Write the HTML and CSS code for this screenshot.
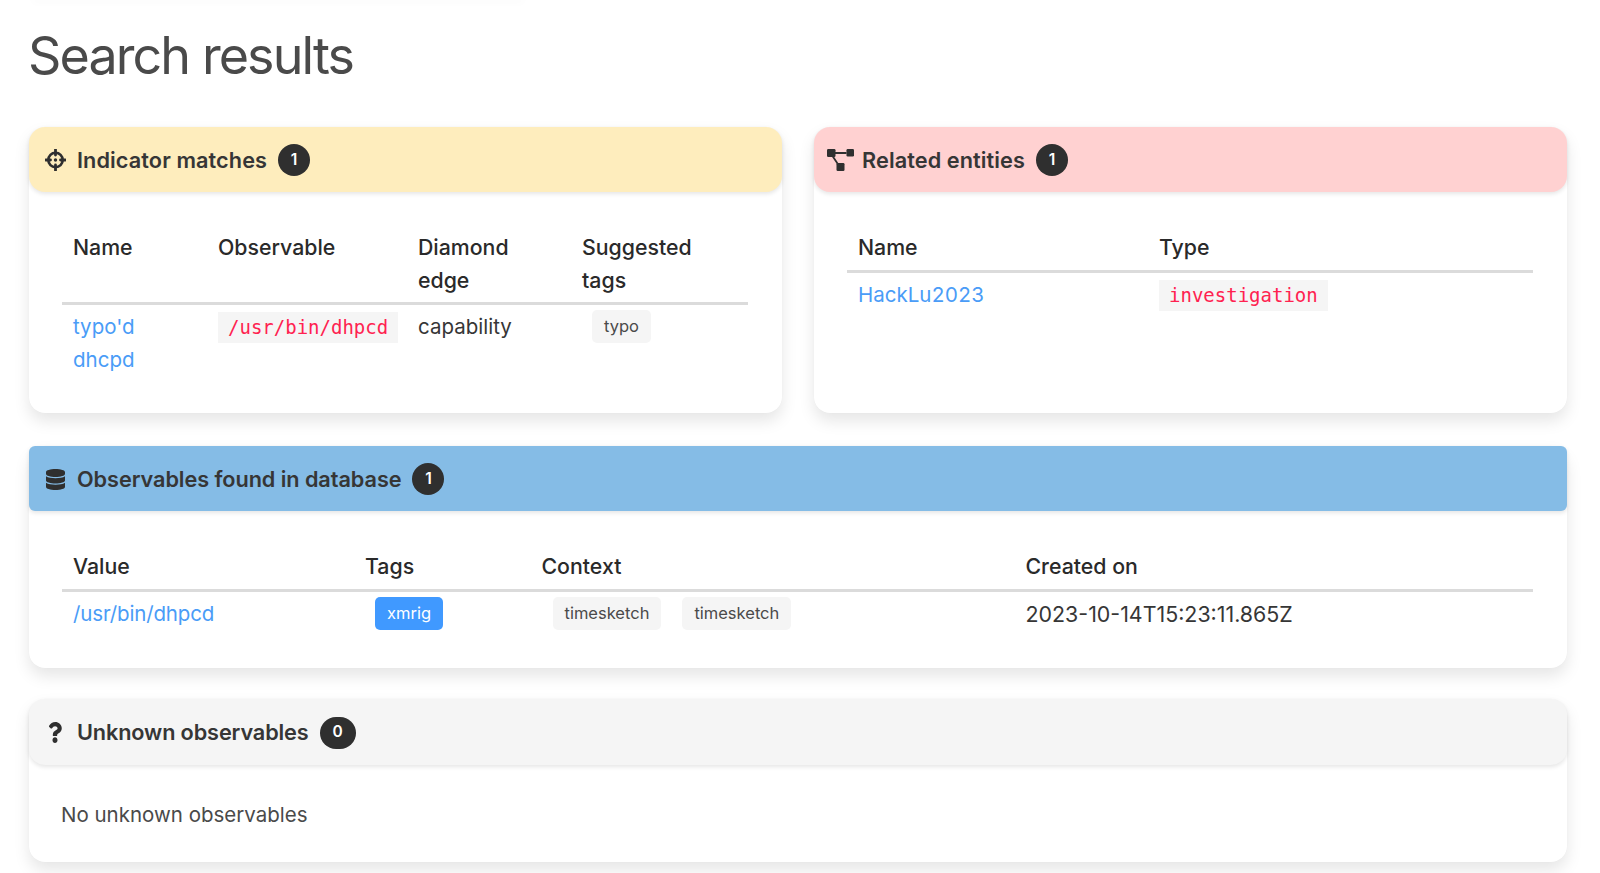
FILE: index.html
```html
<!DOCTYPE html>
<html lang="en">
<head>
    <meta charset="UTF-8">
    <title>Search results</title>
    <link rel="stylesheet" href="styles.css">
</head>
<body>
    <div class="prev-edge"></div>
    <h1 class="title">Search results</h1>

    <div class="columns">
        <div class="card">
            <header class="card-head head-yellow">
                <span class="icon">
                    <svg class="icon-cross" viewBox="0 0 21 22"><circle cx="10.5" cy="11" r="7.2" fill="none" stroke="currentColor" stroke-width="2.6"/><path d="M10.5 0.5v5.5M10.5 16v5.5M0.5 11h5M15.5 11h5" fill="none" stroke="currentColor" stroke-width="2.8" stroke-linecap="round"/><circle cx="10.5" cy="11" r="1.7" fill="currentColor"/></svg>
                </span>
                <span class="card-name">Indicator matches</span>
                <span class="count">1</span>
            </header>
            <div class="card-body">
                <table class="tbl">
                    <thead>
                        <tr><th class="w145">Name</th><th class="w200">Observable</th><th class="w164">Diamond edge</th><th>Suggested tags</th></tr>
                    </thead>
                    <tbody>
                        <tr>
                            <td><a href="#">typo'd dhcpd</a></td>
                            <td><code>/usr/bin/dhpcd</code></td>
                            <td>capability</td>
                            <td><span class="tag">typo</span></td>
                        </tr>
                    </tbody>
                </table>
            </div>
        </div>

        <div class="card">
            <header class="card-head head-red">
                <span class="icon">
                    <svg class="icon-graph" viewBox="0 0 27 22"><rect x="0" y="0" width="8.5" height="8" rx="1.2" fill="currentColor"/><rect x="19.5" y="0" width="7.5" height="7.5" rx="1.2" fill="currentColor"/><rect x="9.5" y="14" width="8" height="8" rx="1.2" fill="currentColor"/><path d="M8 4h11.5M5.5 7l5 7.5" fill="none" stroke="currentColor" stroke-width="1.8"/></svg>
                </span>
                <span class="card-name">Related entities</span>
                <span class="count">1</span>
            </header>
            <div class="card-body">
                <table class="tbl">
                    <thead>
                        <tr><th class="w301">Name</th><th>Type</th></tr>
                    </thead>
                    <tbody>
                        <tr>
                            <td><a href="#" class="num">HackLu2023</a></td>
                            <td><code>investigation</code></td>
                        </tr>
                    </tbody>
                </table>
            </div>
        </div>
    </div>

    <div class="card">
        <header class="card-head head-blue">
            <span class="icon">
                <svg class="icon-db" viewBox="0 0 448 512" preserveAspectRatio="none"><path fill="currentColor" d="M448 73.143v45.714C448 159.143 347.667 192 224 192S0 159.143 0 118.857V73.143C0 32.857 100.333 0 224 0s224 32.857 224 73.143zM448 176v102.857C448 319.143 347.667 352 224 352S0 319.143 0 278.857V176c48.125 33.143 136.208 48.572 224 48.572S399.874 209.143 448 176zm0 160v102.857C448 479.143 347.667 512 224 512S0 479.143 0 438.857V336c48.125 33.143 136.208 48.572 224 48.572S399.874 369.143 448 336z"/></svg>
            </span>
            <span class="card-name">Observables found in database</span>
            <span class="count">1</span>
        </header>
        <div class="card-body">
            <table class="tbl">
                <thead>
                    <tr><th class="w292">Value</th><th class="w177">Tags</th><th class="w483">Context</th><th>Created on</th></tr>
                </thead>
                <tbody>
                    <tr>
                        <td><a href="#" class="path">/usr/bin/dhpcd</a></td>
                        <td><span class="tag tag-blue">xmrig</span></td>
                        <td><span class="tag tag-first">timesketch</span><span class="tag">timesketch</span></td>
                        <td class="date">2023-10-14T15:23:11.865Z</td>
                    </tr>
                </tbody>
            </table>
        </div>
    </div>

    <div class="card">
        <header class="card-head head-grey">
            <span class="icon">
                <svg class="icon-help" viewBox="0 0 384 512" preserveAspectRatio="none"><path fill="currentColor" d="M202.021 0C122.202 0 70.503 32.703 29.914 91.026c-7.363 10.58-5.093 25.086 5.178 32.874l43.138 32.709c10.373 7.865 25.132 6.026 33.253-4.148 25.049-31.381 43.63-49.449 82.757-49.449 30.764 0 68.816 19.799 68.816 49.631 0 22.552-18.617 34.134-48.993 51.164-35.423 19.86-82.299 44.576-82.299 106.405V320c0 13.255 10.745 24 24 24h72.471c13.255 0 24-10.745 24-24v-5.773c0-42.86 125.268-44.645 125.268-160.627C377.504 66.256 286.902 0 202.021 0zM192 373.459c-38.196 0-69.271 31.075-69.271 69.271 0 38.195 31.075 69.27 69.271 69.27s69.271-31.075 69.271-69.271-31.075-69.27-69.271-69.27z"/></svg>
            </span>
            <span class="card-name">Unknown observables</span>
            <span class="count count-wide">0</span>
        </header>
        <div class="card-body card-empty">No unknown observables</div>
    </div>
</body>
</html>
```

FILE: styles.css
```css
html, body { height: 873px; overflow: hidden; }
body { margin: 0; padding: 0 33.5px 0 28.5px; font-family: Inter, "Noto Sans", sans-serif; font-size: 20.5px; line-height: 32.5px; color: #363636; background: #fff; }
a { color: #4a9cf7; text-decoration: none; }
.num { font-variant-numeric: tabular-nums; }
.path { letter-spacing: -0.15px; }

.prev-edge { height: 0; width: 490px; margin-left: 4px; box-shadow: 0 0 8px 1px rgba(10, 10, 10, 0.06); }
.title { margin: 0 0 0 -0.5px; padding-top: 26px; height: 127px; box-sizing: border-box; font-size: 52px; line-height: 60px; letter-spacing: -1.9px; font-weight: 400; color: #4a4a4a; }

.columns { display: grid; grid-template-columns: 1fr 1fr; gap: 32px; margin-bottom: 33px; }
.card { background: #fff; border-radius: 16px; margin-bottom: 31px; box-shadow: 0 8px 16px rgba(10, 10, 10, 0.1), 0 0 1px rgba(10, 10, 10, 0.04); }
.columns .card { margin-bottom: 0; height: 286px; }

.card-head { display: flex; align-items: center; box-sizing: border-box; height: 65px; padding: 1px 0 0 13px; border-radius: 16px; box-shadow: 0 2px 4px rgba(10, 10, 10, 0.1); }
.head-yellow { background: #feedbd; }
.head-red { background: #ffd1d1; }
.head-blue { background: #85bce6; border-radius: 6px; }
.head-grey { background: #f5f5f5; height: 66px; }

.icon { display: flex; align-items: center; justify-content: center; width: 27px; margin-right: 8px; color: #2f2f2f; }
.icon svg { display: block; }
.icon-cross { width: 21px; height: 22px; }
.icon-graph { width: 27px; height: 22px; }
.icon-db { width: 19px; height: 21px; }
.icon-help { width: 14px; height: 21px; }

.card-name { font-size: 21.7px; font-weight: 600; margin-left: 0.5px; }
.head-yellow .card-name, .head-red .card-name { letter-spacing: 0.09px; }
.head-blue .card-name { letter-spacing: -0.07px; }
.head-grey .card-name { letter-spacing: -0.13px; }
.count { display: flex; align-items: center; justify-content: center; margin-left: 11px; width: 32px; height: 32px; border-radius: 16px; background: #2f2f2f; color: #fff; font-size: 15.5px; font-weight: 600; }
.count-wide { width: 36px; }

.card-body { padding: 33px 34px 30px 33.5px; }
.card-empty { padding: 34px 32.5px; height: 97px; box-sizing: border-box; color: #4a4a4a; }

.tbl { width: 100%; border-collapse: collapse; table-layout: fixed; }
.tbl th { box-sizing: border-box; text-align: left; font-size: 21.3px; font-weight: 500; padding: 6px 11px 6px; border-bottom: 3px solid #dbdbdb; vertical-align: top; color: #2a2a2a; }
.tbl td { padding: 6px 11px 8px; vertical-align: top; color: #363636; }
.tbl .date { font-size: 21.4px; }
.w145 { width: 145px; }
.w200 { width: 200px; }
.w164 { width: 164px; }
.w301 { width: 301px; }
.w292 { width: 292px; }
.w177 { width: 176.5px; }
.w483 { width: 484px; }

code { display: block; width: fit-content; margin-top: 1px; padding: 0 10px; height: 31px; line-height: 31px; background: #f5f5f5; color: #ff2250; font-family: "DejaVu Sans Mono", monospace; font-size: 19px; }
.tag { display: inline-block; vertical-align: top; height: 33px; line-height: 33px; padding: 0 12px; margin: -1px 12px 0 10px; border-radius: 5px; background: #f5f5f5; color: #4a4a4a; font-size: 16.5px; }
.tag-first { margin-left: 11px; margin-right: 11px; }
.tag-blue { background: #4099ff; color: #fff; }
```
